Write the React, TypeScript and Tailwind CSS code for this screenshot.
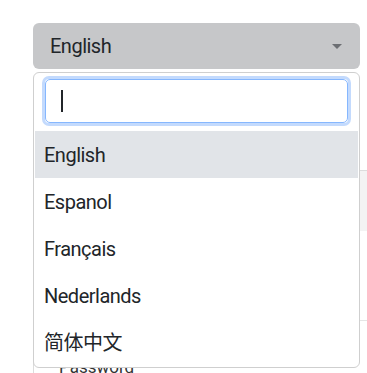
import { useState } from 'react';

const languages = ['English', 'Espanol', 'Français', 'Nederlands', '简体中文'];

export default function App() {
  const [selected] = useState('English');

  return (
    <div
      className="relative h-[373px] w-[367px] overflow-hidden bg-white text-[#212529]"
      style={{ fontFamily: 'Roboto, "Noto Sans CJK SC", sans-serif' }}
    >
      {/* Page behind the dropdown */}
      <div className="pl-[33px] pt-[23px]">
        <button className="flex h-[46px] w-[327px] items-center justify-between rounded-[6px] bg-[#c6c7c9] pl-[17px] pr-[18px] text-[20px] tracking-[-0.5px]">
          <span>{selected}</span>
          <svg width="10" height="5" viewBox="0 0 10 5">
            <path d="M0 0h10L5 5z" fill="#6c6f73" />
          </svg>
        </button>
        <div className="mt-[101px] w-[340px] border-l border-t border-[#dcdcdc]">
          <div className="h-[60px] bg-[#f3f3f3]" />
          <div className="h-[90px] border-b border-[#e5e5e5]" />
          <div className="pl-[25px] pt-[34px] text-[17px] text-[#333]">Password</div>
        </div>
      </div>

      {/* Open dropdown menu */}
      <div className="absolute left-[33px] top-[72px] w-[327px] rounded-[6px] border border-[#cfcfcf] bg-white pb-[1px] pl-[1px] pr-[1px] pt-[3px]">
        <div className="px-[7px] pb-[5px]">
          <div className="flex h-[50px] items-center rounded-[7px] border-[3px] border-[#c3dafd]">
            <div className="flex h-full w-full items-center rounded-[5px] border border-[#86b7fe] bg-white pl-[15px]">
              <span className="block h-[22px] w-[2px] bg-[#212529]" />
            </div>
          </div>
        </div>
        <ul>
          {languages.map((lang) => (
            <li
              key={lang}
              className={`flex h-[47px] items-center pl-[9px] text-[20px] tracking-[-0.5px] ${
                lang === selected ? 'bg-[#e1e4e8]' : ''
              }`}
            >
              {lang}
            </li>
          ))}
        </ul>
      </div>
    </div>
  );
}
